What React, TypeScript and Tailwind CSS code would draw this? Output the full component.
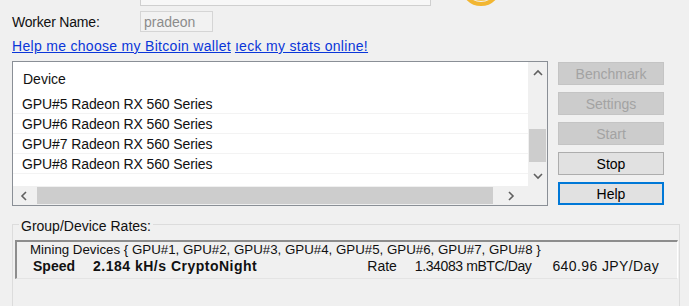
import React from 'react';

const rows = [
  'GPU#5 Radeon RX 560 Series',
  'GPU#6 Radeon RX 560 Series',
  'GPU#7 Radeon RX 560 Series',
  'GPU#8 Radeon RX 560 Series',
];

function Chevron({ dir }: { dir: 'up' | 'down' | 'left' | 'right' }) {
  const d = {
    up: 'M1 6 L5 2 L9 6',
    down: 'M1 2 L5 6 L9 2',
    left: 'M6 1 L2 5 L6 9',
    right: 'M2 1 L6 5 L2 9',
  }[dir];
  const vertical = dir === 'up' || dir === 'down';
  return (
    <svg width={vertical ? 10 : 8} height={vertical ? 8 : 10} viewBox={vertical ? '0 0 10 8' : '0 0 8 10'}>
      <path d={d} fill="none" stroke="#606060" strokeWidth="1.6" />
    </svg>
  );
}

function WinButton({ label, state }: { label: string; state: 'disabled' | 'normal' | 'default' }) {
  const cls =
    state === 'disabled'
      ? 'bg-[#cccccc] border border-[#c4c4c4] text-[#a3a3a3]'
      : state === 'default'
        ? 'bg-[#e1e1e1] border-2 border-[#0078d7] text-black'
        : 'bg-[#e1e1e1] border border-[#adadad] text-black';
  return (
    <div className={`h-[23px] w-[106px] flex items-center justify-center text-[14px] ${cls}`}>{label}</div>
  );
}

export default function App() {
  return (
    <div
      className="w-[689px] h-[306px] bg-[#f0f0f0] overflow-hidden text-[#111] text-[14px] leading-none"
      style={{ fontFamily: '"Liberation Sans", Arial, sans-serif' }}
    >
      {/* cut-off top row */}
      <div className="flex h-[6px]">
        <div className="ml-[140px] w-[291px] h-full bg-[#f7f7f7] border border-t-0 border-[#cfcfcf]" />
        <svg className="ml-[28px]" width="44" height="6" viewBox="0 0 44 6">
          <path d="M4 -14 A18 18 0 0 0 40 -14" fill="none" stroke="#f2b632" strokeWidth="4" />
          <path d="M6 -16 A16 16 0 0 0 38 -16" fill="none" stroke="#f6c550" strokeWidth="2" />
        </svg>
      </div>

      {/* worker name */}
      <div className="flex items-center mt-[5px] h-[21px]">
        <span className="ml-[12px] w-[128px] tracking-[-0.2px]">Worker Name:</span>
        <div className="w-[73px] h-[21px] border border-[#d5d5d5] bg-[#f2f2f2] text-[#8c8c8c] flex items-center pl-[3px]">
          pradeon
        </div>
      </div>

      {/* links */}
      <div className="flex mt-[7px] h-[14px] text-[#0a36d9] underline tracking-[0.3px]">
        <span className="ml-[12px]">Help me choose my Bitcoin wallet</span>
        <span className="ml-[4px]">ıeck my stats online!</span>
      </div>

      {/* device list + buttons */}
      <div className="flex mt-[8px]">
        <div className="ml-[12px] w-[536px] h-[145px] border border-[#8a8f96] bg-white flex flex-col">
          <div className="flex flex-1">
            <div className="flex-1 flex flex-col">
              <div className="h-[32px] flex items-center pl-[10px] pt-[1px]">Device</div>
              {rows.map((r) => (
                <div key={r} className="h-[20px] flex items-center pl-[9px] border-b border-[#f3f3f3] tracking-[-0.1px]">
                  {r}
                </div>
              ))}
            </div>
            <div className="w-[19px] flex flex-col items-center bg-[#f0f0f0]">
              <div className="h-[22px] flex items-center justify-center">
                <Chevron dir="up" />
              </div>
              <div className="h-[45px]" />
              <div className="w-[17px] h-[33px] bg-[#cdcdcd]" />
              <div className="flex-1" />
              <div className="h-[20px] flex items-center justify-center">
                <Chevron dir="down" />
              </div>
            </div>
          </div>
          <div className="h-[19px] flex bg-[#f0f0f0]">
            <div className="w-[22px] flex items-center justify-center">
              <Chevron dir="left" />
            </div>
            <div className="ml-[2px] w-[456px] bg-[#cdcdcd] my-[1px]" />
            <div className="flex-1 flex items-center justify-center">
              <Chevron dir="right" />
            </div>
            <div className="w-[19px]" />
          </div>
        </div>

        <div className="ml-[10px] flex flex-col gap-[7px] pt-[1px]">
          <WinButton label="Benchmark" state="disabled" />
          <WinButton label="Settings" state="disabled" />
          <WinButton label="Start" state="disabled" />
          <WinButton label="Stop" state="normal" />
          <WinButton label="Help" state="default" />
        </div>
      </div>

      {/* group box */}
      <div className="relative mt-[18px] ml-[12px] w-[668px] h-[90px] border border-[#dcdcdc]">
        <span className="absolute -top-[6px] left-[6px] bg-[#f0f0f0] px-[2px]">Group/Device Rates:</span>
        <div className="mt-[15px] ml-[2px] w-[663px] h-[39px] border-t-2 border-l-2 border-t-[#8d8d8d] border-l-[#8d8d8d] border-r border-b border-r-[#ffffff] border-b-[#e4e4e4] flex flex-col">
          <div className="h-[15px] flex items-center pl-[13px] text-[13.3px]">
            Mining Devices {'{'} GPU#1, GPU#2, GPU#3, GPU#4, GPU#5, GPU#6, GPU#7, GPU#8 {'}'}
          </div>
          <div className="h-[18px] flex items-center">
            <span className="ml-[16px] font-bold">Speed</span>
            <span className="ml-[18px] font-bold tracking-[0.5px]">2.184 kH/s CryptoNight</span>
            <span className="ml-[110px]">Rate</span>
            <span className="ml-[18px] tracking-[-0.4px]">1.34083 mBTC/Day</span>
            <span className="ml-[21px] tracking-[0.4px]">640.96 JPY/Day</span>
          </div>
        </div>
      </div>
    </div>
  );
}
